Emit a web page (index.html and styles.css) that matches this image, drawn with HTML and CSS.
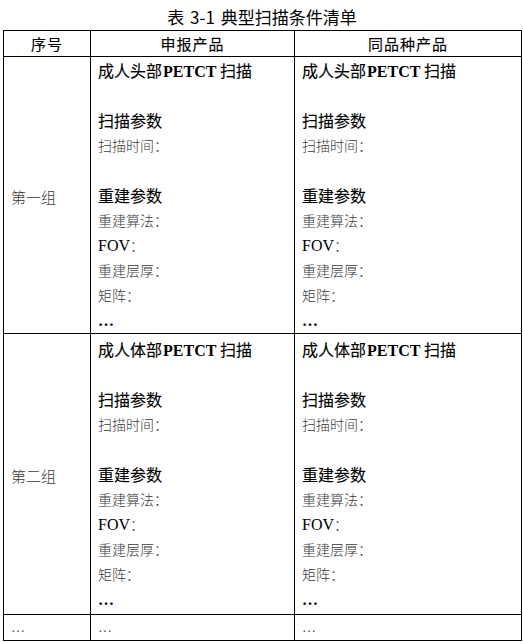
FILE: index.html
```html
<!DOCTYPE html>
<html lang="zh-CN">
<head>
<meta charset="utf-8">
<title>表 3-1 典型扫描条件清单</title>
<link rel="stylesheet" href="styles.css">
</head>
<body>
<h1 class="caption">表 3-1 典型扫描条件清单</h1>
<table class="spec">
  <colgroup>
    <col class="c-no">
    <col class="c-own">
    <col class="c-peer">
  </colgroup>
  <thead>
    <tr><th>序号</th><th>申报产品</th><th>同品种产品</th></tr>
  </thead>
  <tbody>
    <tr class="group g1">
      <td class="no">第一组</td>
      <td class="params">
        <div class="ln head">成人头部<span class="lat">PETCT</span> 扫描</div>
        <div class="ln"></div>
        <div class="ln sub">扫描参数</div>
        <div class="ln item">扫描时间：</div>
        <div class="ln"></div>
        <div class="ln sub">重建参数</div>
        <div class="ln item">重建算法：</div>
        <div class="ln item"><span class="lat fov">FOV</span>：</div>
        <div class="ln item">重建层厚：</div>
        <div class="ln item">矩阵：</div>
        <div class="ln more">…</div>
      </td>
      <td class="params">
        <div class="ln head">成人头部<span class="lat">PETCT</span> 扫描</div>
        <div class="ln"></div>
        <div class="ln sub">扫描参数</div>
        <div class="ln item">扫描时间：</div>
        <div class="ln"></div>
        <div class="ln sub">重建参数</div>
        <div class="ln item">重建算法：</div>
        <div class="ln item"><span class="lat fov">FOV</span>：</div>
        <div class="ln item">重建层厚：</div>
        <div class="ln item">矩阵：</div>
        <div class="ln more">…</div>
      </td>
    </tr>
    <tr class="group g2">
      <td class="no">第二组</td>
      <td class="params">
        <div class="ln head">成人体部<span class="lat">PETCT</span> 扫描</div>
        <div class="ln"></div>
        <div class="ln sub">扫描参数</div>
        <div class="ln item">扫描时间：</div>
        <div class="ln"></div>
        <div class="ln sub">重建参数</div>
        <div class="ln item">重建算法：</div>
        <div class="ln item"><span class="lat fov">FOV</span>：</div>
        <div class="ln item">重建层厚：</div>
        <div class="ln item">矩阵：</div>
        <div class="ln more">…</div>
      </td>
      <td class="params">
        <div class="ln head">成人体部<span class="lat">PETCT</span> 扫描</div>
        <div class="ln"></div>
        <div class="ln sub">扫描参数</div>
        <div class="ln item">扫描时间：</div>
        <div class="ln"></div>
        <div class="ln sub">重建参数</div>
        <div class="ln item">重建算法：</div>
        <div class="ln item"><span class="lat fov">FOV</span>：</div>
        <div class="ln item">重建层厚：</div>
        <div class="ln item">矩阵：</div>
        <div class="ln more">…</div>
      </td>
    </tr>
    <tr class="tail">
      <td>…</td><td>…</td><td>…</td>
    </tr>
  </tbody>
</table>
</body>
</html>
```
FILE: styles.css
```css
html, body {
  background: #fff;
}

body {
  margin: 0;
  padding: 0 0 0 3px;
  font-family: "Noto Sans CJK SC", sans-serif;
  color: #000;
}

.caption {
  margin: 0;
  width: 518px;
  padding-top: 4px;
  height: 26px;
  line-height: 26px;
  font-size: 17px;
  font-weight: normal;
  text-align: center;
  word-spacing: 2px;
}

.spec {
  border-collapse: collapse;
  table-layout: fixed;
  width: 518px;
}

.c-no { width: 87px; }
.c-own { width: 204px; }
.c-peer { width: 227px; }

.spec th,
.spec td {
  border: 1px solid #000;
  padding: 0 7px;
}

.spec th {
  height: 25px;
  line-height: 25px;
  font-size: 15px;
  font-weight: normal;
  letter-spacing: 1px;
  text-align: center;
  padding-top: 0;
  -webkit-text-stroke: 0.15px #000;
}

.spec td.no {
  vertical-align: middle;
  font-size: 15px;
  font-weight: 300;
  color: #3a3a3a;
  padding-top: 2px;
}

.spec td.params {
  vertical-align: top;
  padding-top: 1px;
}

.g2 td.params {
  padding-top: 3px;
  padding-bottom: 2px;
}

.ln {
  height: 25px;
  line-height: 25px;
  white-space: nowrap;
}

.head,
.sub {
  font-size: 16px;
  font-weight: normal;
  color: #000;
  -webkit-text-stroke: 0.15px #000;
}

.head .lat {
  font-weight: bold;
  -webkit-text-stroke: 0;
  margin-left: 1px;
}

.item {
  font-size: 14px;
  font-weight: 300;
  color: #3a3a3a;
}

.lat {
  font-family: "Liberation Serif", serif;
  line-height: 1;
}

.fov {
  font-size: 16px;
  font-weight: normal;
  color: #000;
}

.more {
  font-family: "Liberation Serif", serif;
  font-size: 16px;
  font-weight: bold;
}

.tail td {
  height: 25px;
  line-height: 25px;
  font-family: "Liberation Serif", serif;
  font-size: 14px;
  color: #555;
}
```
